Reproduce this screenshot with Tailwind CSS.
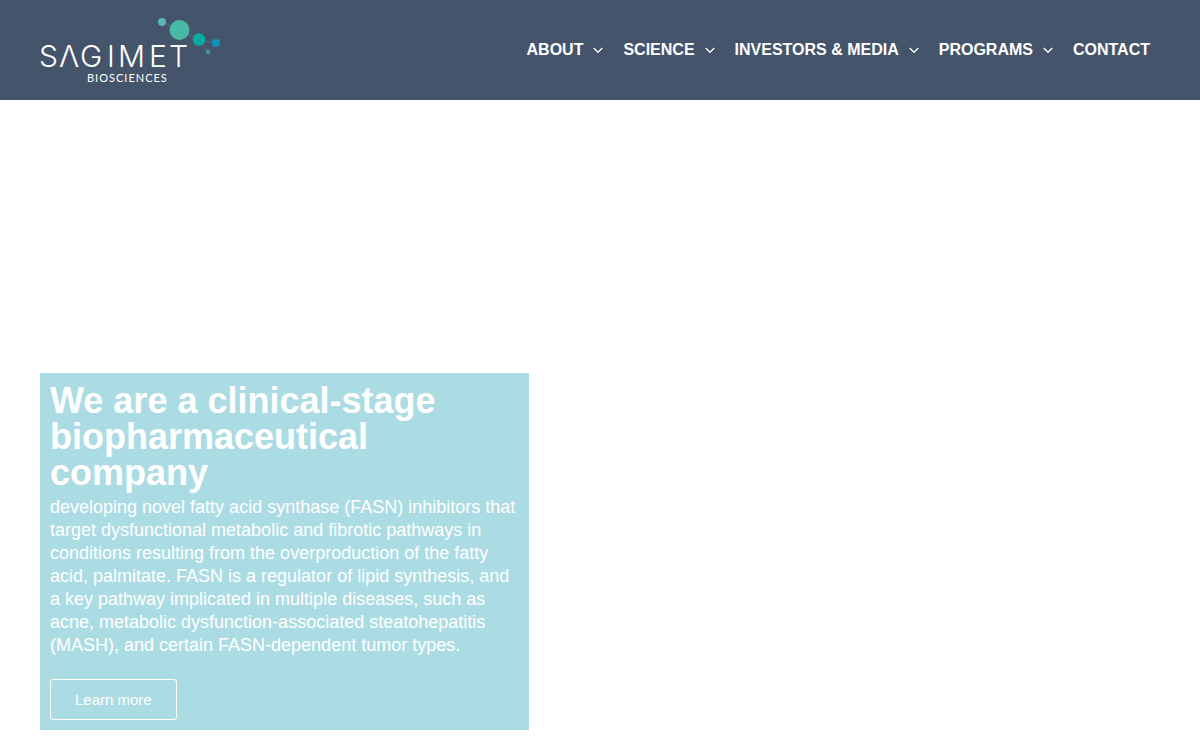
<!DOCTYPE html>
<html lang="en">
<head>
    <meta charset="utf-8">
    <meta name="viewport" content="width=device-width, initial-scale=1">
    <title>Sagimet Biosciences</title>
    <script src="https://cdn.jsdelivr.net/npm/@tailwindcss/browser@4"></script>
</head>
<body class="bg-white font-['Liberation_Sans',Arial,sans-serif]">
    <header class="bg-[#44546a] text-white">
        <div class="flex items-center justify-between h-[100px] pl-10 pr-[50px]">
            <a href="#" aria-label="Sagimet Biosciences">
                <svg class="w-[182px] h-[70px]" viewBox="0 0 182 70" fill="white">
                    <!-- molecule -->
                    <path d="M122 7L139 15L159 25L176 28M159 25L168 37" stroke="#566a80" fill="none" />
                    <circle cx="122" cy="7" r="4" fill="#5bb5b5" />
                    <circle cx="139.500" cy="15" r="10" fill="#48b9a5" />
                    <circle cx="159" cy="24.500" r="6.3" fill="#08ab9f" />
                    <circle cx="176" cy="28" r="4" fill="#0c93b5" />
                    <circle cx="168" cy="37" r="2.4" fill="#4a8f9d" />
                    <!-- wordmark -->
                    <text class="text-[30px] font-light font-[Inter,sans-serif]" x="-1 19 40 67 78 109 129" y="52">SΛGIMET</text>
                    <text class="text-[11px] tracking-[1px] font-[Lato,sans-serif]" x="47" y="67">BIOSCIENCES</text>
                </svg>
            </a>
            <nav>
                <ul class="flex items-center gap-5 text-base font-bold">
                    <li>
                        <a href="#" class="flex items-center gap-[10px]">ABOUT
                            <svg class="w-[10px] h-[10px]" viewBox="0 0 10 10" fill="none" stroke="currentColor" stroke-width="1.3"><path d="M0.700 3L5 7.300L9.300 3" /></svg>
                        </a>
                    </li>
                    <li>
                        <a href="#" class="flex items-center gap-[10px]">SCIENCE
                            <svg class="w-[10px] h-[10px]" viewBox="0 0 10 10" fill="none" stroke="currentColor" stroke-width="1.3"><path d="M0.700 3L5 7.300L9.300 3" /></svg>
                        </a>
                    </li>
                    <li>
                        <a href="#" class="flex items-center gap-[10px]">INVESTORS &amp; MEDIA
                            <svg class="w-[10px] h-[10px]" viewBox="0 0 10 10" fill="none" stroke="currentColor" stroke-width="1.3"><path d="M0.700 3L5 7.300L9.300 3" /></svg>
                        </a>
                    </li>
                    <li>
                        <a href="#" class="flex items-center gap-[10px]">PROGRAMS
                            <svg class="w-[10px] h-[10px]" viewBox="0 0 10 10" fill="none" stroke="currentColor" stroke-width="1.3"><path d="M0.700 3L5 7.300L9.300 3" /></svg>
                        </a>
                    </li>
                    <li><a href="#">CONTACT</a></li>
                </ul>
            </nav>
        </div>
    </header>
    <main class="flex flex-col items-start px-10 pt-[273px] pb-5">
        <section class="w-full max-w-[489px] p-[10px] bg-[#abdce3] text-white">
            <h1 class="text-4xl leading-[36px] font-bold">We are a clinical-stage biopharmaceutical company</h1>
            <p class="mt-[5px] text-lg leading-[23px]">developing novel fatty acid synthase (FASN) inhibitors that target dysfunctional metabolic and fibrotic pathways in conditions resulting from the overproduction of the fatty acid, palmitate. FASN is a regulator of lipid synthesis, and a key pathway implicated in multiple diseases, such as acne, metabolic dysfunction-associated steatohepatitis (MASH), and certain FASN-dependent tumor types.</p>
            <a href="#" class="inline-block align-top mt-[22px] px-6 py-3 border border-white rounded-[3px] text-[15px] leading-[15px]">Learn more</a>
        </section>
    </main>
</body>
</html>
